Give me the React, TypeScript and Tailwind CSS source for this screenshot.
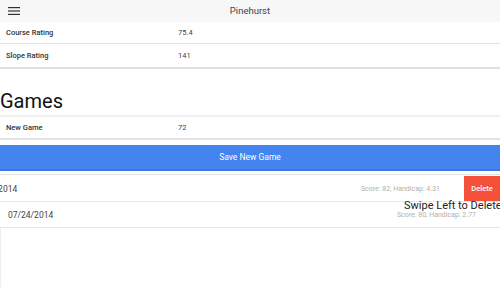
import React from 'react';

const font = { fontFamily: 'Roboto, "Noto Sans", sans-serif' };

function Hamburger() {
  return (
    <svg width="12" height="8" viewBox="0 0 12 8" className="text-[#333]">
      <rect x="0" y="0" width="12" height="1.2" fill="currentColor" />
      <rect x="0" y="3.4" width="12" height="1.2" fill="currentColor" />
      <rect x="0" y="6.8" width="12" height="1.2" fill="currentColor" />
    </svg>
  );
}

function InfoRow({ label, value, tall }: { label: string; value: string; tall?: boolean }) {
  return (
    <div className={`flex items-center ${tall ? 'h-[24px]' : 'h-[22px]'} border-b border-[#e2e2e2] bg-white`}>
      <span className="w-[178px] pl-[6px] text-[7.5px] font-medium text-[#333]">{label}</span>
      <span className="text-[7.5px] text-[#444]">{value}</span>
    </div>
  );
}

export default function App() {
  const games = [
    { date: '07/24/2014', score: 'Score: 82, Handicap: 4.31', swiped: true },
    { date: '07/24/2014', score: 'Score: 80, Handicap: 2.77', swiped: false },
  ];

  return (
    <div className="w-[500px] h-[287px] overflow-hidden bg-white relative" style={font}>
      {/* Header */}
      <div className="h-[22px] bg-[#f7f7f7] flex items-center relative">
        <div className="pl-[8px] flex items-center">
          <Hamburger />
        </div>
        <div className="absolute inset-0 flex items-center justify-center text-[9.5px] text-[#444]">Pinehurst</div>
      </div>

      {/* Course info */}
      <InfoRow label="Course Rating" value="75.4" />
      <div className="border-b border-[#dcdcdc]">
        <InfoRow label="Slope Rating" value="141" tall />
      </div>

      {/* Games */}
      <div className="pt-[18px] text-[20px] leading-[28px] text-[#111]">Games</div>
      <div className="border-t-2 border-[#f0f0f0]">
        <InfoRow label="New Game" value="72" />
      </div>
      <div className="h-[4px] border-t border-[#e2e2e2]" />
      <button className="w-full h-[26px] bg-[#4384ef] text-white text-[8.5px] border-b-2 border-[#3a78e0]">
        Save New Game
      </button>
      <div className="h-[2px] border-b border-[#e2e2e2] mt-[2px]" />

      {/* Game list */}
      <div className="relative mt-px">
        {games.map((g, i) => (
          <div key={i} className="relative h-[26px] border-b border-[#e6e6e6] overflow-hidden">
            <div className={`flex items-center justify-between h-full pl-[8px] pr-[24px] ${g.swiped ? '-translate-x-[36px]' : ''}`}>
              <span className="text-[8.5px] text-[#444]">{g.date}</span>
              <span className="text-[7px] text-[#b0b0b0]">{g.score}</span>
            </div>
            {g.swiped && (
              <div className="absolute right-0 top-0 w-[36px] h-[25px] bg-[#f4503a] flex items-center justify-center text-white text-[7.5px] font-medium">
                Delete
              </div>
            )}
          </div>
        ))}
        <div className="absolute left-[404px] top-[23px] text-[11px] leading-[14px] text-[#222] whitespace-nowrap">
          Swipe Left to Delete
        </div>
      </div>
      <div className="absolute left-0 top-[228px] bottom-0 w-px bg-[#eeeeee]" />
    </div>
  );
}
